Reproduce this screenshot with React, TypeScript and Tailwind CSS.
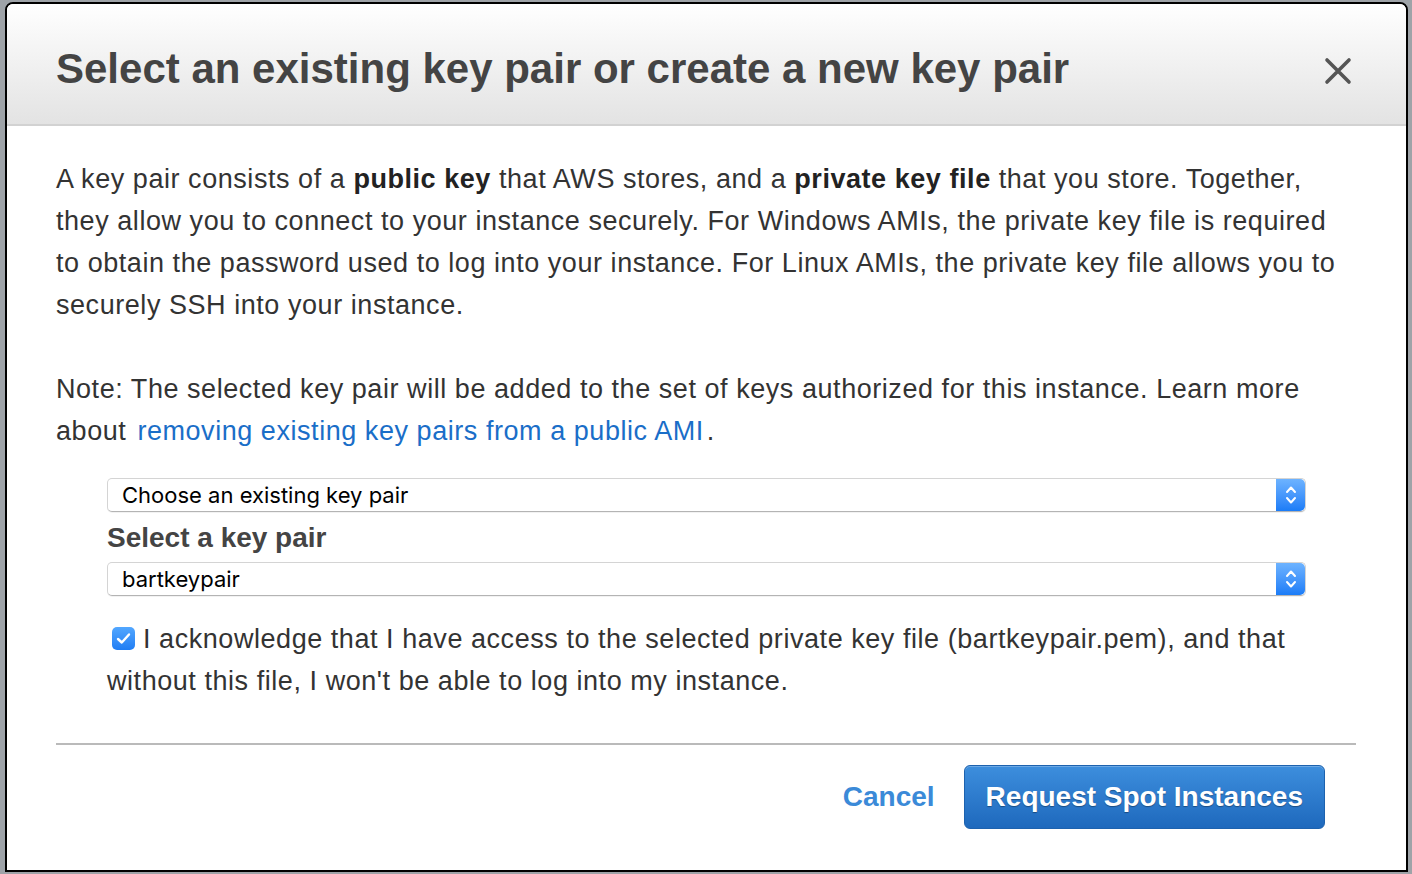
import React from "react";

function Stepper() {
  return (
    <div className="flex h-full w-[29px] items-center justify-center rounded-r-[5px] bg-gradient-to-b from-[#6db3ff] to-[#1a7cf7]">
      <svg width="12" height="22" viewBox="0 0 12 22" fill="none" stroke="white" strokeWidth="2" strokeLinecap="round" strokeLinejoin="round">
        <path d="M2 8 L6 3.5 L10 8" />
        <path d="M2 14 L6 18.5 L10 14" />
      </svg>
    </div>
  );
}

function SelectBox({ value }: { value: string }) {
  return (
    <div className="flex h-[34px] w-full items-center rounded-[5px] border border-[#d4d4d4] border-b-[#b4b4b4] bg-white shadow-[0_1px_0_rgba(0,0,0,0.05)]">
      <span className="flex-1 pl-[14px] font-['Inter',sans-serif] text-[22px] text-black">{value}</span>
      <Stepper />
    </div>
  );
}

export default function App() {
  return (
    <div className="h-[874px] w-[1412px] bg-[#9ea3a8] pl-[5px] pr-[4px] pt-[2px] font-['Liberation_Sans',Arial,sans-serif]">
      <div className="flex h-[870px] flex-col overflow-hidden rounded-t-[8px] border-2 border-black bg-white">
        <div className="flex h-[122px] shrink-0 items-center justify-between border-b-2 border-[#d2d2d2] bg-gradient-to-b from-white to-[#e3e3e3] pl-[49px] pr-[54px] pt-[8px]">
          <h1 className="text-[42px] font-bold text-[#444]">
            Select an existing key pair or create a new key pair
          </h1>
          <svg width="28" height="28" viewBox="0 0 28 28" stroke="#555" strokeWidth="3.6" strokeLinecap="round" className="translate-y-[3px]">
            <path d="M3 3 L25 25 M25 3 L3 25" />
          </svg>
        </div>

        <div className="flex flex-1 flex-col px-[49px] pt-[32px]">
          <div className="w-[1300px] text-[27px] leading-[42px] tracking-[0.55px] text-[#333]">
            <p>
              A key pair consists of a <b className="text-[#222]">public key</b> that AWS stores, and a{" "}
              <b className="text-[#222]">private key file</b> that you store. Together, they allow you to connect to
              your instance securely. For Windows AMIs, the private key file is required to obtain the password used
              to log into your instance. For Linux AMIs, the private key file allows you to securely SSH into your
              instance.
            </p>
            <p className="mt-[42px]">
              Note: The selected key pair will be added to the set of keys authorized for this instance. Learn more
              about <span className="mx-[3px] text-[#1a6ec8]">removing existing key pairs from a public AMI</span>.
            </p>
          </div>

          <div className="mx-[51px] mt-[26px] flex flex-col">
            <SelectBox value="Choose an existing key pair" />
            <label className="mt-[9px] text-[28px] font-bold leading-[34px] text-[#444]">Select a key pair</label>
            <div className="mt-[7px]">
              <SelectBox value="bartkeypair" />
            </div>
            <p className="mt-[22px] text-[27px] leading-[42px] tracking-[0.55px] text-[#333]">
              <span className="mr-[8px] ml-[5px] inline-flex h-[23px] w-[23px] -translate-y-[3px] items-center justify-center rounded-[5px] bg-gradient-to-b from-[#52a7ff] to-[#1f7df4] align-baseline">
                <svg width="15" height="13" viewBox="0 0 15 13" fill="none" stroke="white" strokeWidth="2.4" strokeLinecap="round" strokeLinejoin="round">
                  <path d="M2 7 L5.8 10.5 L13 2.5" />
                </svg>
              </span>
              I acknowledge that I have access to the selected private key file (bartkeypair.pem), and that without
              this file, I won't be able to log into my instance.
            </p>
          </div>

          <div className="mt-[41px] h-[2px] w-[1300px] bg-[#bababa]" />

          <div className="mr-[31px] mt-[20px] flex w-[1269px] items-center justify-end gap-[29px]">
            <span className="text-[28px] font-bold text-[#3b8ad8]">Cancel</span>
            <button className="h-[64px] rounded-[6px] border border-[#1d62ae] bg-gradient-to-b from-[#3d8edd] to-[#1e69bd] px-[21px] text-[28px] font-bold text-white [text-shadow:0_1px_1px_rgba(0,0,0,0.35)] shadow-[inset_0_1px_0_rgba(255,255,255,0.25)]">
              Request Spot Instances
            </button>
          </div>
        </div>
      </div>
    </div>
  );
}
